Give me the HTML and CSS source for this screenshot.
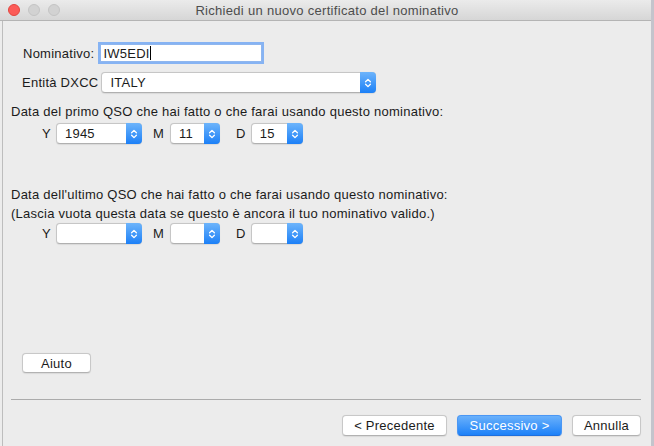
FILE: index.html
```html
<!DOCTYPE html>
<html lang="it">
<head>
    <meta charset="UTF-8">
    <title>Richiedi un nuovo certificato del nominativo</title>
    <link rel="stylesheet" href="styles.css">
</head>
<body>
    <div class="window">
        <div class="titlebar">
            <div class="lights">
                <span class="light close"></span>
                <span class="light"></span>
                <span class="light"></span>
            </div>
            <div class="title">Richiedi un nuovo certificato del nominativo</div>
        </div>

        <div class="content">
            <div class="field-row row-call">
                <span class="label">Nominativo:</span>
                <div class="text-field focused"><span>IW5EDI</span><span class="caret"></span></div>
            </div>

            <div class="field-row row-dxcc">
                <span class="label">Entità DXCC</span>
                <div class="popup dxcc">
                    <span class="popup-value">ITALY</span>
                    <span class="stepper"><svg width="8" height="12" viewBox="0 0 8 12"><path d="M1.6 4.8 L4 2.4 L6.4 4.8 M1.6 7.2 L4 9.6 L6.4 7.2"/></svg></span>
                </div>
            </div>

            <p class="prompt first">Data del primo QSO che hai fatto o che farai usando questo nominativo:</p>
            <div class="date-row">
                <span class="label y">Y</span>
                <div class="popup year">
                    <span class="popup-value">1945</span>
                    <span class="stepper"><svg width="8" height="12" viewBox="0 0 8 12"><path d="M1.6 4.8 L4 2.4 L6.4 4.8 M1.6 7.2 L4 9.6 L6.4 7.2"/></svg></span>
                </div>
                <span class="label m">M</span>
                <div class="popup month">
                    <span class="popup-value">11</span>
                    <span class="stepper"><svg width="8" height="12" viewBox="0 0 8 12"><path d="M1.6 4.8 L4 2.4 L6.4 4.8 M1.6 7.2 L4 9.6 L6.4 7.2"/></svg></span>
                </div>
                <span class="label d">D</span>
                <div class="popup day">
                    <span class="popup-value">15</span>
                    <span class="stepper"><svg width="8" height="12" viewBox="0 0 8 12"><path d="M1.6 4.8 L4 2.4 L6.4 4.8 M1.6 7.2 L4 9.6 L6.4 7.2"/></svg></span>
                </div>
            </div>

            <p class="prompt last">Data dell'ultimo QSO che hai fatto o che farai usando questo nominativo:<br>(Lascia vuota questa data se questo è ancora il tuo nominativo valido.)</p>
            <div class="date-row">
                <span class="label y">Y</span>
                <div class="popup year">
                    <span class="popup-value"></span>
                    <span class="stepper"><svg width="8" height="12" viewBox="0 0 8 12"><path d="M1.6 4.8 L4 2.4 L6.4 4.8 M1.6 7.2 L4 9.6 L6.4 7.2"/></svg></span>
                </div>
                <span class="label m">M</span>
                <div class="popup month">
                    <span class="popup-value"></span>
                    <span class="stepper"><svg width="8" height="12" viewBox="0 0 8 12"><path d="M1.6 4.8 L4 2.4 L6.4 4.8 M1.6 7.2 L4 9.6 L6.4 7.2"/></svg></span>
                </div>
                <span class="label d">D</span>
                <div class="popup day">
                    <span class="popup-value"></span>
                    <span class="stepper"><svg width="8" height="12" viewBox="0 0 8 12"><path d="M1.6 4.8 L4 2.4 L6.4 4.8 M1.6 7.2 L4 9.6 L6.4 7.2"/></svg></span>
                </div>
            </div>

            <button class="btn help">Aiuto</button>

            <div class="separator"></div>

            <div class="actions">
                <button class="btn wide">&lt; Precedente</button>
                <button class="btn wide default">Successivo &gt;</button>
                <button class="btn cancel">Annulla</button>
            </div>
        </div>
    </div>
</body>
</html>
```

FILE: styles.css
```css
html, body {
    margin: 0;
    padding: 0;
    background: #ececec;
}
body {
    font-family: "Liberation Sans", Arial, sans-serif;
    font-size: 13px;
    letter-spacing: 0.25px;
    color: #1b1b1b;
}
.window {
    width: 651px;
    height: 446px;
    border-right: 3px solid #c4c4cc;
    display: flex;
    flex-direction: column;
    overflow: hidden;
}

/* title bar */
.titlebar {
    height: 20px;
    border-bottom: 1px solid #b4b4b4;
    background: linear-gradient(#ebebeb, #d6d6d6);
    display: grid;
    grid-template-columns: 1fr auto 1fr;
    align-items: center;
}
.lights {
    display: flex;
    gap: 8px;
    padding-left: 8px;
}
.light {
    width: 10px;
    height: 10px;
    border-radius: 50%;
    background: #d2d2d2;
    border: 1px solid #c4c4c4;
}
.light.close {
    background: #fc5b57;
    border-color: #e2463f;
}
.title {
    font-size: 13px;
    letter-spacing: 0.3px;
    color: #4d4d4d;
    margin-left: 3px;
}

/* dialog body */
.content {
    flex: 1;
    margin-left: 2px;
    border-left: 1px solid #bdbdbd;
    padding: 0 10px 0 8px;
    display: flex;
    flex-direction: column;
    align-items: flex-start;
}
.field-row {
    display: flex;
    align-items: center;
}
.row-call {
    margin-top: 23px;
    padding-left: 12px;
    height: 18px;
}
.row-dxcc {
    margin-top: 10px;
    padding-left: 11px;
}
.row-call .label {
    margin-right: 6px;
}
.row-dxcc .label {
    margin-right: 3px;
}

.text-field {
    width: 158px;
    height: 16px;
    background: #fff;
    border: 1px solid #b8b8b8;
    padding-left: 2px;
    display: flex;
    align-items: center;
}
.text-field.focused {
    border-color: #8fb6ee;
    box-shadow: 0 0 0 2px #86b3f3;
}
.caret {
    width: 1px;
    height: 14px;
    background: #000;
    margin-left: 0;
}

/* popup buttons */
.popup {
    height: 19px;
    background: #fff;
    border: 1px solid #c6c6c6;
    border-bottom-color: #b0b0b0;
    border-radius: 4px;
    display: flex;
    align-items: stretch;
    box-shadow: 0 0.5px 1px rgba(0, 0, 0, 0.08);
}
.popup-value {
    flex: 1;
    padding-left: 8px;
    line-height: 19px;
}
.stepper {
    width: 16px;
    margin: -1px -1px -1px 0;
    border-radius: 0 4px 4px 0;
    background: linear-gradient(#6db4fb, #1c80f7);
    display: flex;
    align-items: center;
    justify-content: center;
}
.stepper path {
    fill: none;
    stroke: #fff;
    stroke-width: 1.3;
    stroke-linecap: round;
    stroke-linejoin: round;
}
.popup.dxcc {
    width: 273px;
}
.popup.year {
    width: 84px;
}
.popup.month {
    width: 48px;
}
.popup.day {
    width: 50px;
}

.prompt {
    margin: 0;
    line-height: 16px;
}
.prompt.first {
    margin-top: 11px;
}
.prompt.last {
    margin-top: 41px;
    line-height: 19px;
}
.date-row {
    display: flex;
    align-items: center;
    margin-top: 3px;
    padding-left: 31px;
}
.prompt.last + .date-row {
    margin-top: 0;
}
.date-row .label {
    margin-right: 5px;
}
.date-row .label.m {
    margin-left: 11px;
    margin-right: 6px;
}
.date-row .label.d {
    margin-left: 16px;
}

/* push buttons */
.btn {
    font-family: inherit;
    font-size: 13px;
    letter-spacing: 0.25px;
    color: #1b1b1b;
    height: 21px;
    padding: 0;
    background: #fff;
    border: 1px solid #c8c8c8;
    border-bottom-color: #b2b2b2;
    border-radius: 4px;
    box-shadow: 0 0.5px 1px rgba(0, 0, 0, 0.08);
}
.btn.help {
    width: 69px;
    height: 20px;
    margin-top: 109px;
    margin-left: 11px;
}
.btn.wide {
    width: 105px;
}
.btn.cancel {
    width: 69px;
}
.btn.default {
    color: #fff;
    background: linear-gradient(#6ab1fb, #1d81f8);
    border-color: #4b97f4;
    border-bottom-color: #1f6fdc;
}
.separator {
    align-self: stretch;
    margin-top: 26px;
    height: 0;
    border-top: 1px solid #ababab;
}
.actions {
    align-self: stretch;
    display: flex;
    justify-content: flex-end;
    gap: 10px;
    margin-top: 15px;
}
```
